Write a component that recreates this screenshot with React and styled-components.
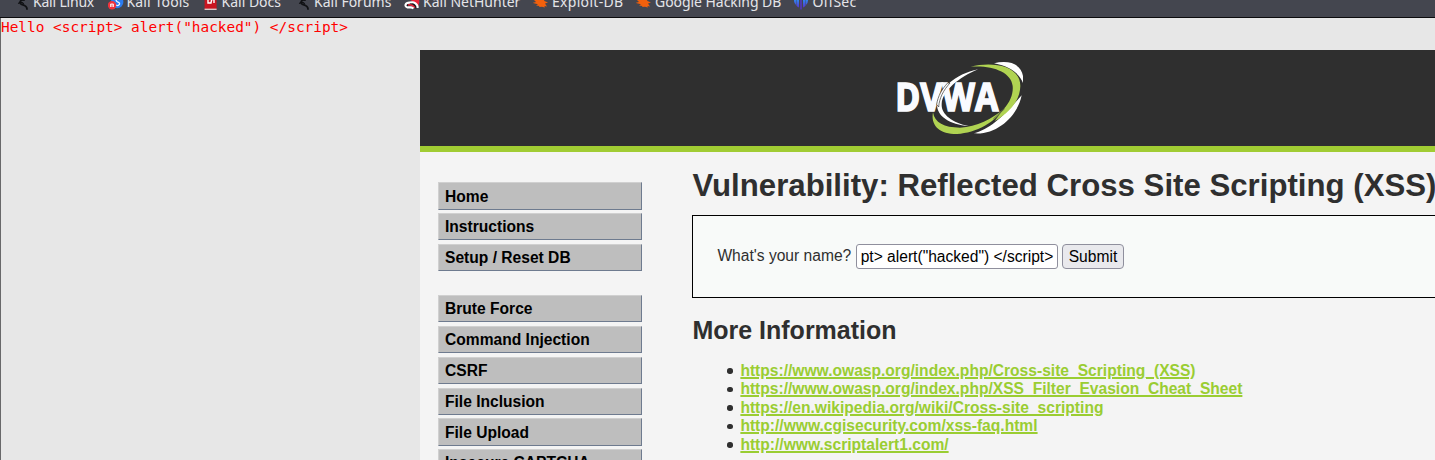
import React from "react";
import styled, { createGlobalStyle } from "styled-components";

const GlobalStyle = createGlobalStyle`
  * { box-sizing: border-box; }
  body {
    margin: 0;
    overflow: hidden;
    background: #e7e7e7;
    font-family: "Liberation Sans", Arial, sans-serif;
  }
`;

const Window = styled.div`
  height: 460px;
  display: flex;
  flex-direction: column;
  overflow: hidden;
`;

const BookmarksBar = styled.nav`
  flex: none;
  height: 18px;
  display: flex;
  align-items: flex-end;
  padding: 0 0 5px 14px;
  overflow: hidden;
  background: #44464f;
  border-bottom: 1px solid #0c0c0e;
`;

const Bookmark = styled.a`
  flex: none;
  width: ${(p) => p.$width}px;
  display: flex;
  align-items: center;
  gap: 3px;
  height: 20px;
  color: #e4e5e9;
  font: 14px/20px "Noto Sans", sans-serif;
  letter-spacing: ${(p) => p.$tracking}px;
  white-space: nowrap;

  svg {
    flex: none;
    width: 16px;
    height: 16px;
  }
`;

const Viewport = styled.div`
  flex: 1;
  min-height: 0;
  border-left: 1px solid #68686a;
  overflow: hidden;
`;

const Output = styled.pre`
  margin: 0;
  height: 32px;
  color: #ff0000;
  font: 14.42px/18px "DejaVu Sans Mono", monospace;
`;

const Page = styled.div`
  margin-left: 419px;
  width: 1080px;
  background: #f4f4f4;
`;

const Header = styled.header`
  height: 102px;
  display: flex;
  justify-content: center;
  padding-top: 12px;
  background: #2f2f2f;
  border-bottom: 6px solid #a1cc33;
`;

const Columns = styled.div`
  display: flex;
  height: 400px;
`;

const Menu = styled.div`
  flex: none;
  width: 272.4px;
  padding: 30px 0 0 18px;
`;

const MenuGroup = styled.ul`
  list-style: none;
  margin: 0 0 24px;
  padding: 0;
  width: 204px;
`;

const MenuItem = styled.li`
  height: ${(p) => (p.$tall ? 28 : 27)}px;
  margin-bottom: ${(p) => p.$gap}px;
  padding-left: 6px;
  background: #bebebe;
  border: 1px solid;
  border-color: #d0d0d0 #6e7b8f #6e7b8f #d0d0d0;
  color: #000;
  font-size: 15.6px;
  font-weight: bold;
  line-height: ${(p) => (p.$tall ? 27 : 25)}px;
`;

const Main = styled.main`
  flex: 1;
  color: #2f2f2f;
  font-size: 15.6px;
`;

const Title = styled.h1`
  margin: 0;
  padding-top: 16px;
  height: 63px;
  font-size: 31.2px;
  line-height: 36px;
  white-space: nowrap;
`;

const Panel = styled.form`
  height: 83px;
  display: flex;
  align-items: flex-start;
  padding: 28px 24px;
  background: #f8faf9;
  border: 1px solid #000;
`;

const Label = styled.label`
  width: 138.6px;
  line-height: 24px;
`;

const NameInput = styled.input`
  width: 202px;
  height: 25px;
  margin: 0 4px 0 0;
  padding: 0 3px;
  border: 1px solid #8f8f9d;
  border-radius: 3px;
  background: #fff;
  color: #000;
  font: 15.6px "Liberation Sans", Arial, sans-serif;
  text-align: center;
`;

const Submit = styled.button`
  width: 62px;
  height: 25px;
  padding: 0;
  border: 1px solid #8f8f9d;
  border-radius: 4px;
  background: #e9e9ed;
  color: #000;
  font: 15.6px "Liberation Sans", Arial, sans-serif;
`;

const Subtitle = styled.h2`
  margin: 17px 0 16px;
  font-size: 25px;
  line-height: 30px;
`;

const Links = styled.ul`
  list-style: none;
  margin: 0;
  padding: 0.6px 0 0 35px;
  line-height: 18.5px;
`;

const LinkRow = styled.li`
  display: flex;
  align-items: center;
  gap: 7.6px;

  &::before {
    content: "";
    width: 5.4px;
    height: 5.4px;
    border-radius: 50%;
    background: #2f2f2f;
  }
`;

const Link = styled.a`
  color: #9acd32;
  font-weight: bold;
  text-decoration: underline 2px;
  text-underline-offset: 1px;
`;

function DragonIcon() {
  return (
    <svg viewBox="0 0 16 16" fill="none" stroke="#101114" strokeLinecap="round">
      <path d="M1 5C4 2 8 3 10 6M4.6 9.2C6.5 8 8.5 8.6 9.4 9.6" strokeWidth="1.3" />
      <path d="M10 6C6 5.6 4.8 9 7.6 10.4C10.6 11.2 13 12 13 15" strokeWidth="1.8" />
    </svg>
  );
}

function ToolsIcon() {
  return (
    <svg viewBox="0 0 16 16">
      <circle cx="9.2" cy="8" r="6.2" fill="#2b7cf0" />
      <path d="M12.6 5.5C9.6-1 5.6 6 9.6 7.8C13.6 9 10.6 13 7.1 10.8" fill="none" stroke="#e9f3ff" strokeWidth="1.3" />
      <circle cx="4" cy="11.2" r="4.2" fill="#f0323c" />
      <path d="M2.6 13V10H5.4V13M4 10V13" fill="none" stroke="#fff" strokeWidth=".9" />
    </svg>
  );
}

function DocsIcon() {
  return (
    <svg viewBox="0 0 16 16">
      <path d="M1.6 0H13.6V16H1.6Z" fill="#c91521" />
      <path d="M1.6 14.6H13.6V16H1.6Z" fill="#d8c9c9" />
      <path d="M5 5.4V9H8L8.6 5.6H11V9" fill="none" stroke="#fff" strokeWidth="1.4" />
    </svg>
  );
}

function HunterIcon() {
  return (
    <svg viewBox="0 0 16 16" fill="none">
      <path d="M8 0Q15 1 15.4 8L14 13L8 7L3 4Z" fill="#e8253a" />
      <path d="M2.5 12C5 8 10 9 13 14" stroke="#15161a" strokeWidth="3" />
      <path d="M6 8.6C10 7.2 14 10 13.6 14M6 8.6C1 8.4 0 12.6 3.6 13.4C6 13.6 7.4 12.6 9.6 14.4" stroke="#fff" strokeWidth="2.1" />
      <path d="M4 11C7 10 9 11 11 13.6" stroke="#e8253a" strokeWidth="1.5" />
    </svg>
  );
}

function ExploitIcon() {
  return (
    <svg viewBox="0 0 16 16" fill="#f2600c">
      <path d="M2 2L4 5L6 2L10 3L11.4 7L15 8.5L12 9.5L14 12.5L11.4 12L12 13.4L9 12.8L6 13L6.5 12L3 11.4L5 10.2L-.4 8.8L3 8L1 6Z" />
    </svg>
  );
}

function OffSecIcon() {
  return (
    <svg viewBox="0 0 16 16">
      <defs>
        <linearGradient id="offsec" x1="0" y1="0" x2="0" y2="1">
          <stop offset=".35" stopColor="#2f86ee" />
          <stop offset="1" stopColor="#5636ce" />
        </linearGradient>
      </defs>
      <g transform="translate(-1 0)">
        <path d="M.9 3H3V11Q1 9.5 .9 6ZM3.4 2H6V13.4Q4.2 13 3.4 11.4Z" fill="url(#offsec)" />
        <path d="M7.3 1H8.7V15L8 16L7.3 15Z" fill="#5636ce" />
        <path d="M15.1 3H13V11Q15 9.5 15.1 6ZM12.6 2H10V13.4Q11.8 13 12.6 11.4Z" fill="url(#offsec)" />
      </g>
    </svg>
  );
}

function Logo() {
  return (
    <svg width="126" height="72" viewBox="51 36 378 216" role="img" aria-label="DVWA">
      <path d="M295 58C225 72 174 119 171 161C169 198 210 224 266 228C219 219 183 194 185 162C187 124 235 82 295 58Z" fill="#fff" />
      <path d="M342 40C392 28 436 45 429 99C420 74 395 50 342 40Z" fill="#fff" />
      <path d="M425 136C413 198 350 256 282 250C330 236 366 204 425 136Z" fill="#fff" />
      <text
        x="46" y="184" fill="#fafbff" stroke="#fafbff" strokeWidth="5"
        fontFamily="Open Sans, Noto Sans, sans-serif" fontSize="118" fontWeight="700"
        textLength="309" lengthAdjust="spacingAndGlyphs"
      >
        DVWA
      </text>
      <path d="M203 99C186 117 174 138 170 163L176 171C178 144 190 121 210 99Z" fill="#fff" stroke="#2f2f2f" strokeWidth="2" />
      <path d="M272 50C335 34 421 45 421 108C420 151 390 187 344 213L371 177C392 154 400 130 398 108C394 66 337 45 272 50Z" fill="#b0d352" />
      <path d="M159 187C164 218 192 233 240 233C290 230 337 206 372 176C338 224 277 252 221 252C175 250 152 224 159 187Z" fill="#b0d352" />
      <path d="M340 207L374 176" stroke="#2f2f2f" strokeWidth="2" />
    </svg>
  );
}

const bookmarks = [
  { label: "Kali Linux", icon: DragonIcon, width: 93.5, tracking: -0.2 },
  { label: "Kali Tools", icon: ToolsIcon, width: 95, tracking: 0.15 },
  { label: "Kali Docs", icon: DocsIcon, width: 92.5, tracking: 0 },
  { label: "Kali Forums", icon: DragonIcon, width: 109, tracking: 0 },
  { label: "Kali NetHunter", icon: HunterIcon, width: 129, tracking: 0 },
  { label: "Exploit-DB", icon: ExploitIcon, width: 103, tracking: 0.3 },
  { label: "Google Hacking DB", icon: ExploitIcon, width: 157.5, tracking: -0.05 },
  { label: "OffSec", icon: OffSecIcon, width: 80, tracking: 0.15 },
];

const menu = [
  [
    { label: "Home", tall: true, gap: 3 },
    { label: "Instructions", gap: 4 },
    { label: "Setup / Reset DB", gap: 0 },
  ],
  [
    { label: "Brute Force", gap: 4 },
    { label: "Command Injection", gap: 4 },
    { label: "CSRF", gap: 4 },
    { label: "File Inclusion", gap: 3 },
    { label: "File Upload", tall: true, gap: 3 },
    { label: "Insecure CAPTCHA", gap: 4 },
  ],
];

const links = [
  "https://www.owasp.org/index.php/Cross-site_Scripting_(XSS)",
  "https://www.owasp.org/index.php/XSS_Filter_Evasion_Cheat_Sheet",
  "https://en.wikipedia.org/wiki/Cross-site_scripting",
  "http://www.cgisecurity.com/xss-faq.html",
  "http://www.scriptalert1.com/",
];

export default function App() {
  return (
    <Window>
      <GlobalStyle />
      <BookmarksBar>
        {bookmarks.map(({ label, icon: Icon, width, tracking }) => (
          <Bookmark key={label} $width={width} $tracking={tracking}>
            <Icon />
            <span>{label}</span>
          </Bookmark>
        ))}
      </BookmarksBar>
      <Viewport>
        <Output>{'Hello <script> alert("hacked") </script>'}</Output>
        <Page>
          <Header>
            <Logo />
          </Header>
          <Columns>
            <Menu>
              {menu.map((group) => (
                <MenuGroup key={group[0].label}>
                  {group.map(({ label, tall, gap }) => (
                    <MenuItem key={label} $tall={tall} $gap={gap}>
                      {label}
                    </MenuItem>
                  ))}
                </MenuGroup>
              ))}
            </Menu>
            <Main>
              <Title>Vulnerability: Reflected Cross Site Scripting (XSS)</Title>
              <Panel>
                <Label htmlFor="name">What's your name?</Label>
                <NameInput id="name" defaultValue={'pt> alert("hacked") </script>'} />
                <Submit type="button">Submit</Submit>
              </Panel>
              <Subtitle>More Information</Subtitle>
              <Links>
                {links.map((url) => (
                  <LinkRow key={url}>
                    <Link href={url}>{url}</Link>
                  </LinkRow>
                ))}
              </Links>
            </Main>
          </Columns>
        </Page>
      </Viewport>
    </Window>
  );
}
